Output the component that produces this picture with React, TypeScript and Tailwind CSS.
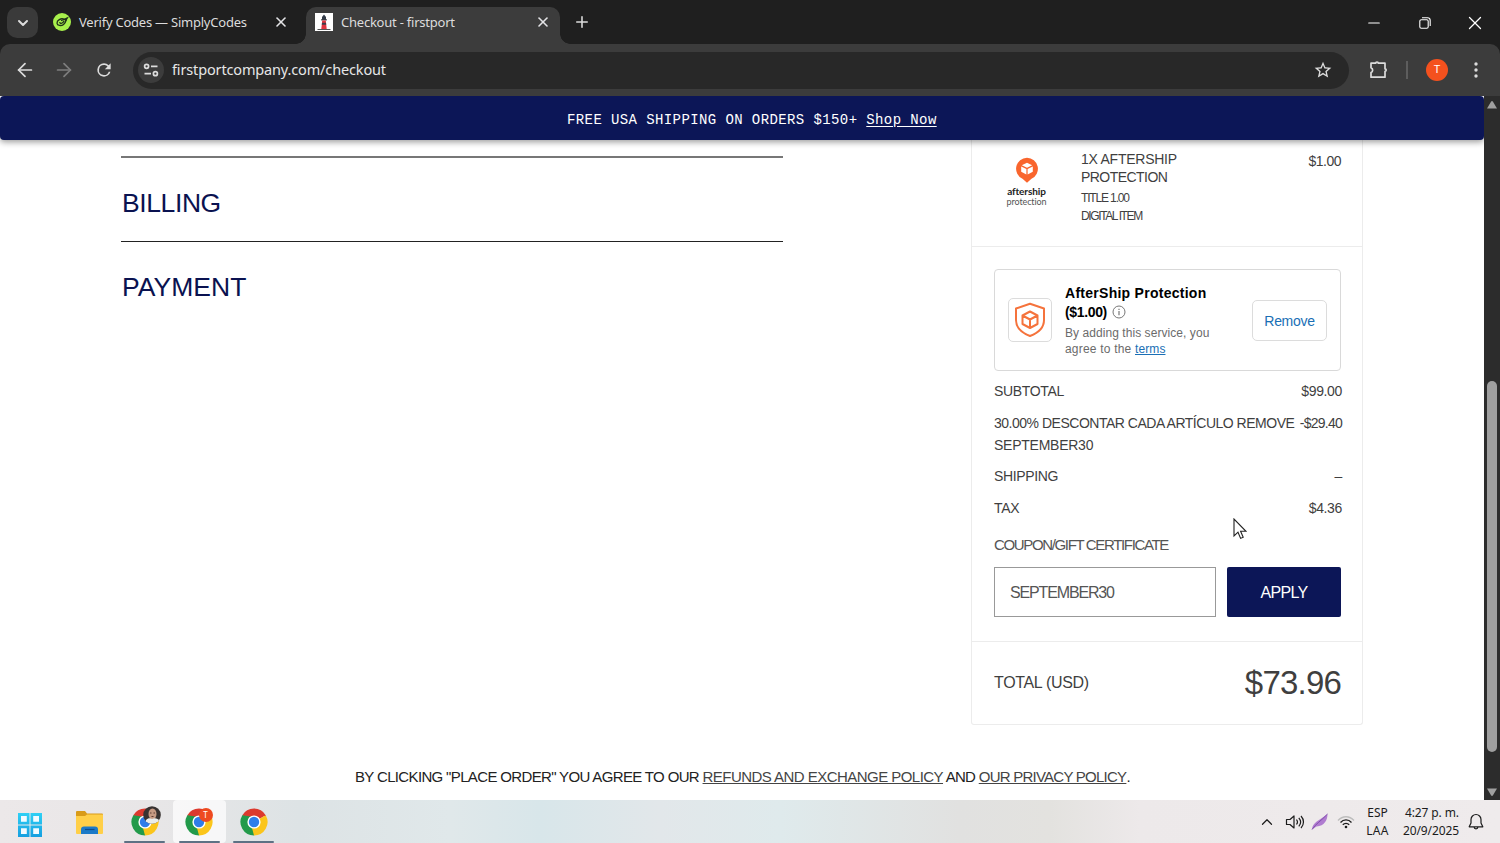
import { ReactNode } from "react";
import {
  ArrowLeft,
  ArrowRight,
  ChevronDown,
  ChevronUp,
  Minus,
  Plus,
  X,
} from "lucide-react";

function ChromeLogo() {
  return (
    <svg viewBox="0 0 28 28" className="size-7">
      <path d="M14 14 L2.3 7.25 A13.5 13.5 0 0 1 25.7 7.25 Z" fill="#dc3a2e" />
      <path d="M14 14 L25.7 7.25 A13.5 13.5 0 0 1 14 27.5 Z" fill="#fbc51b" />
      <path d="M14 14 L14 27.5 A13.5 13.5 0 0 1 2.3 7.25 Z" fill="#229a4a" />
      <path d="M14 7.7 H25.9 L25.7 7.25 L14 6 Z" fill="#dc3a2e" />
      <path d="M8.5 17.2 L2.3 7.25 L14 9 Z" fill="#229a4a" />
      <path d="M19.5 17.2 L14 27.5 L12 20 Z" fill="#fbc51b" />
      <circle cx="14" cy="14" r="6.6" fill="#fff" />
      <circle cx="14" cy="14" r="5.2" fill="#2f7de9" />
    </svg>
  );
}

function SimplyCodesIcon() {
  return (
    <svg viewBox="0 0 18 18" className="size-[18px]">
      <circle cx="9" cy="9" r="9" fill="#a8f04c" />
      <g fill="none" stroke="#20301a" strokeWidth="1.3" strokeLinecap="round">
        <path d="M11 6.2C8 4.8 3.8 7.3 4 10.2c.2 2.6 4.2 3 6.6 1.2 1.4-1 2.2-2.6 2.6-4.2" />
        <path d="M6.8 9.6c.6 1.4 3 .8 4-1.4M8.5 7.5l5.8-2.6-2 3.2" />
      </g>
    </svg>
  );
}

function LighthouseIcon() {
  return (
    <svg viewBox="0 0 18 18" className="size-[18px]">
      <path d="M0 0h18v18H0z" fill="#fff" />
      <path d="M7 4l2-2.5L11 4v2.5H7z" fill="#333b48" />
      <path d="M6.2 6.2h5.6v1.2H6.2z" fill="#20252e" />
      <path d="M7.2 7.4h3.6l.9 8.6H6.3z" fill="#e03540" />
      <path d="M7 9.8h4l.2 2H6.8z" fill="#3b3f4a" />
      <path d="M2.5 16h13v1h-13z" fill="#555" />
    </svg>
  );
}

function Tab({
  icon,
  title,
  active,
}: {
  icon: ReactNode;
  title: string;
  active?: boolean;
}) {
  return (
    <div
      className={
        active
          ? "relative h-[37px] w-[254px] rounded-t-[10px] bg-[#3c3c3c] flex items-center pl-[9px] pr-[9px] pb-[7px]"
          : "h-[37px] w-[254px] flex items-center pl-[9px] pr-[9px] pb-[7px]"
      }
    >
      {active && (
        <>
          <span className="absolute -left-2.5 bottom-0 size-2.5 bg-[radial-gradient(circle_at_0_0,transparent_9.5px,#3c3c3c_10px)]" />
          <span className="absolute -right-2.5 bottom-0 size-2.5 bg-[radial-gradient(circle_at_100%_0,transparent_9.5px,#3c3c3c_10px)]" />
        </>
      )}
      {icon}
      <span className="ml-[8px] flex-1 whitespace-nowrap text-[13px] leading-5 tracking-[-0.23px]">
        {title}
      </span>
      <X className="size-4 text-zinc-200" strokeWidth={2.4} />
    </div>
  );
}

function TabStrip() {
  return (
    <div className="h-11 bg-[#1f1f1f] flex pt-[7px] text-[#dcdcdc] font-['Noto_Sans',sans-serif]">
      <button
        type="button"
        className="ml-[7px] size-[31px] rounded-[10px] bg-[#3a3a3a] flex items-center justify-center"
      >
        <ChevronDown className="size-4" strokeWidth={3} />
      </button>
      <div className="ml-[6px] flex gap-2">
        <Tab icon={<SimplyCodesIcon />} title="Verify Codes — SimplyCodes" />
        <Tab active icon={<LighthouseIcon />} title="Checkout - firstport" />
      </div>
      <Plus className="ml-[13px] mt-[6px] size-[18px]" strokeWidth={2.1} />
      <div className="ml-auto flex h-[31px] items-center text-white">
        <Minus className="size-[18px] mr-[36px]" strokeWidth={1.6} />
        <svg
          viewBox="0 0 12 12"
          className="size-3 mr-[33px]"
          fill="none"
          stroke="currentColor"
          strokeWidth="1.1"
        >
          <rect x=".8" y="2.8" width="8.4" height="8.4" rx="1.5" />
          <path d="M3 .8h5.5a2.7 2.7 0 0 1 2.7 2.7V9" />
        </svg>
        <X className="size-[22px] mr-[14px]" strokeWidth={1.4} />
      </div>
    </div>
  );
}

function Toolbar() {
  return (
    <div className="bg-[#1f1f1f]">
      <div className="h-[52px] rounded-t-[10px] bg-[#3c3c3c] flex items-center text-[#dcdcdc]">
        <ArrowLeft className="ml-3.5 size-[22px]" strokeWidth={1.9} />
        <ArrowRight
          className="ml-[17px] size-[22px] text-[#7d7d7d]"
          strokeWidth={1.9}
        />
        <svg
          viewBox="0 0 24 24"
          className="ml-[19px] size-5"
          fill="currentColor"
        >
          <path d="M17.65 6.35A7.95 7.95 0 0 0 12 4a8 8 0 1 0 7.73 10h-2.08A6 6 0 1 1 12 6c1.66 0 3.14.69 4.22 1.78L13 11h7V4z" />
        </svg>
        <div className="ml-[19px] w-[1216px] h-[37px] rounded-full bg-[#282828] flex items-center pl-[5px] pr-[16px]">
          <span className="size-[26px] rounded-full bg-[#3c3c3c] flex items-center justify-center">
            <svg
              viewBox="0 0 16 14"
              className="w-4 h-3.5"
              fill="none"
              stroke="currentColor"
              strokeWidth="1.7"
            >
              <circle cx="3.6" cy="3.3" r="2" />
              <path d="M8 3.3h6.5M1.5 10.7H8" />
              <circle cx="12.4" cy="10.7" r="2" />
            </svg>
          </span>
          <span className="ml-2 flex-1 font-['Noto_Sans',sans-serif] text-[14.5px] tracking-[-0.15px] text-[#e6e6e6]">
            firstportcompany.com/checkout
          </span>
          <svg viewBox="0 0 24 24" className="size-5" fill="currentColor">
            <path d="M22 9.24l-7.19-.62L12 2 9.19 8.63 2 9.24l5.46 4.73L5.82 21 12 17.27 18.18 21l-1.63-7.03L22 9.24zM12 15.4l-3.76 2.27 1-4.28-3.32-2.88 4.38-.38L12 6.1l1.71 4.04 4.38.38-3.32 2.88 1 4.28L12 15.4z" />
          </svg>
        </div>
        <svg
          viewBox="0 0 20 20"
          className="ml-[20px] size-5"
          fill="none"
          stroke="currentColor"
          strokeWidth="1.7"
          strokeLinejoin="round"
        >
          <path d="M2 3.2h4.7a1.3 1.2 0 0 1 2.6 0H16v5.6a1.2 1.3 0 0 1 0 2.6V17.2H2v-4.7c2-.6 2.4-3.8 0-4.8z" />
        </svg>
        <div className="ml-[17px] w-0.5 h-[18px] bg-[#5d5d5d]" />
        <span className="ml-[18px] size-[22px] rounded-full bg-[#f4511e] text-white text-[11px] flex items-center justify-center font-['Roboto',sans-serif]">
          T
        </span>
        <svg viewBox="0 0 4 16" className="ml-[26px] w-1 h-4" fill="currentColor">
          <circle cx="2" cy="2" r="1.7" />
          <circle cx="2" cy="8" r="1.7" />
          <circle cx="2" cy="14" r="1.7" />
        </svg>
      </div>
    </div>
  );
}

function AftershipLogo() {
  return (
    <div className="w-[41px] flex flex-col items-center">
      <svg viewBox="0 0 24 26" className="w-6 h-[26px]">
        <path
          d="M12 .8a11 11 0 0 1 4.5 21l-4.5 4-4.5-4A11 11 0 0 1 12 .8z"
          fill="#f9652d"
        />
        <path d="M12 5.8l5.2 2.5-5.2 2.5-5.2-2.5z" fill="#fff" />
        <path d="M6.2 9.5l5.2 2.5v5.4l-5.2-2.6z" fill="#fff" />
        <path d="M17.8 9.5L12.6 12v5.4l5.2-2.6z" fill="#fff" />
      </svg>
      <span className="mt-[3px] font-['Lato',sans-serif] font-bold text-[10px] leading-[11px] tracking-[-0.1px] text-[#222]">
        aftership
      </span>
      <span className="font-['Lato',sans-serif] text-[9px] leading-[9px] tracking-[-0.1px] text-[#555]">
        protection
      </span>
    </div>
  );
}

function ProtectionBox() {
  return (
    <div className="w-[347px] h-[102px] rounded-[4px] border border-[#d9d9d9] flex items-center">
      <div className="ml-[13px] size-11 rounded-[5px] border border-[#dcdcdc] flex items-center justify-center">
        <svg
          viewBox="0 0 32 36"
          className="w-8 h-9"
          fill="none"
          stroke="#f5733c"
          strokeWidth="2"
          strokeLinejoin="round"
        >
          <path d="M16 1.8L30 6.5V18c0 8-6 13-14 16C8 31 2 26 2 18V6.5z" />
          <path d="M16 9.5l7.5 4v8.5L16 26l-7.5-4v-8.5zM8.5 13.5l7.5 4 7.5-4M16 17.5V26" />
        </svg>
      </div>
      <div className="ml-[13px] w-[187px] text-[12px] leading-4 text-[#6b6b6b]">
        <p className="text-[14px] leading-[19px] font-bold text-black tracking-[0.27px]">
          AfterShip Protection
        </p>
        <p className="flex items-center mb-[3px] text-[14px] leading-[19px] font-bold text-black">
          <span>($1.00)</span>
          <svg
            viewBox="0 0 14 14"
            className="ml-[5px] size-3.5"
            fill="none"
            stroke="#777"
          >
            <circle cx="7" cy="7" r="6" />
            <path d="M7 6v4.2M7 3.7v1.2" strokeWidth="1.2" />
          </svg>
        </p>
        <p className="tracking-[0.06px]">By adding this service, you</p>
        <p>
          <span className="tracking-[0.2px]">agree to the </span>
          <a className="text-[#1a6fb5] underline tracking-[0.1px]" href="#">
            terms
          </a>
        </p>
      </div>
      <button
        type="button"
        className="w-[75px] h-[41px] rounded-[5px] border border-[#dcdcdc] pt-px text-[14px] tracking-[-0.3px] text-[#1a6fb5]"
      >
        Remove
      </button>
    </div>
  );
}

function OrderSummary() {
  return (
    <aside className="ml-[188px] w-[392px] h-[585px] rounded-b-[3px] border-x border-b border-[#ececec] text-[#3f3f3f] text-[14px] leading-[22px] tracking-[-0.35px]">
      <div className="h-[107px] border-b border-[#ececec] flex pt-[11px] pl-[34px] pr-[21px]">
        <div className="pt-[6px]">
          <AftershipLogo />
        </div>
        <div className="ml-[34px] flex-1 leading-[17.5px]">
          <p className="tracking-[-0.25px]">1X AFTERSHIP</p>
          <p className="tracking-[-0.55px]">PROTECTION</p>
          <p className="mt-[4px] text-[12px] tracking-[-1.15px]">TITLE 1.00</p>
          <p className="text-[12px] tracking-[-1.38px]">DIGITAL ITEM</p>
        </div>
        <span className="leading-5 tracking-[-0.5px]">$1.00</span>
      </div>

      <div className="h-[395px] border-b border-[#ececec] pt-[22px] pl-[22px] pr-[20px]">
        <ProtectionBox />
        <div className="mt-[9px] flex justify-between">
          <span>SUBTOTAL</span>
          <span>$99.00</span>
        </div>
        <div className="mt-[10px] flex justify-between">
          <div>
            <p className="tracking-[-0.49px]">
              30.00% DESCONTAR CADA ARTÍCULO REMOVE
            </p>
            <p className="tracking-[-0.25px]">SEPTEMBER30</p>
          </div>
          <span className="tracking-[-0.75px]">-$29.40</span>
        </div>
        <div className="mt-[9px] flex justify-between">
          <span>SHIPPING</span>
          <span>–</span>
        </div>
        <div className="mt-[10px] flex justify-between">
          <span>TAX</span>
          <span>$4.36</span>
        </div>
        <p className="mt-[15px] text-[15px] tracking-[-1.35px] text-[#555]">
          COUPON/GIFT CERTIFICATE
        </p>
        <div className="mt-[11px] flex justify-between pr-[1px]">
          <div className="w-[222px] h-[50px] border border-[#999] px-[15px] text-[16px] leading-[49px] tracking-[-1.15px] text-[#555]">
            SEPTEMBER30
          </div>
          <button
            type="button"
            className="w-[114px] h-[50px] rounded-[2px] bg-[#0c1657] pt-px text-white text-[16px] tracking-[-0.7px]"
          >
            APPLY
          </button>
        </div>
      </div>

      <div className="h-[82px] flex items-center justify-between pl-[22px] pr-[21px]">
        <span className="text-[16px] tracking-[-0.33px]">TOTAL (USD)</span>
        <span className="text-[33px] tracking-[-0.8px]">$73.96</span>
      </div>
    </aside>
  );
}

function CheckoutPage() {
  return (
    <main className="w-[1484px] h-[704px] overflow-hidden bg-white font-['Liberation_Sans',Arial,sans-serif]">
      <div className="relative h-11 rounded-sm bg-[#0c1657] shadow-[0_2px_6px_rgba(0,0,0,0.4)] pt-[13px] pl-[567px] font-['Liberation_Mono',monospace] text-[14px] leading-[22px] tracking-[0.4px] text-white whitespace-pre">
        FREE USA SHIPPING ON ORDERS $150+{" "}
        <a className="underline underline-offset-2" href="#">
          Shop Now
        </a>
      </div>
      <div className="flex">
        <section className="ml-[121px] w-[662px] pt-4 text-[26.5px] leading-[30px] text-[#0a1250]">
          <div className="h-0.5 bg-[#777]" />
          <h2 className="mt-[30px] mb-[23px] pl-px tracking-[-0.4px]">
            BILLING
          </h2>
          <div className="h-px bg-[#222]" />
          <h2 className="mt-[30px] pl-px tracking-[0.05px]">PAYMENT</h2>
        </section>
        <OrderSummary />
      </div>
      <p className="mt-[42px] pl-[355px] text-[15px] leading-[20px] tracking-[-0.65px] text-[#222] whitespace-pre">
        BY CLICKING "PLACE ORDER" YOU AGREE TO OUR{" "}
        <a className="text-[#444] underline tracking-[-0.54px]" href="#">
          REFUNDS AND EXCHANGE POLICY
        </a>
        <span className="tracking-[-0.7px]"> AND </span>
        <a className="text-[#444] underline tracking-[-0.75px]" href="#">
          OUR PRIVACY POLICY
        </a>
        .
      </p>
    </main>
  );
}

function Scrollbar() {
  return (
    <div className="w-4 h-[704px] bg-[#2c2c2c] flex flex-col items-center pt-[5px] pb-1">
      <svg viewBox="0 0 10 8" className="w-2.5 h-2" fill="#a0a0a0">
        <path d="M4 .8a1.2 1.2 0 0 1 2 0L10 7.5H0z" />
      </svg>
      <div className="mt-[272px] w-2.5 h-[371px] rounded-full bg-[#9f9f9f]" />
      <svg viewBox="0 0 10 8" className="mt-auto w-2.5 h-2" fill="#a0a0a0">
        <path d="M4 7.2a1.2 1.2 0 0 0 2 0L10 .5H0z" />
      </svg>
    </div>
  );
}

function TaskbarApp({
  children,
  active,
}: {
  children?: ReactNode;
  active?: boolean;
}) {
  return (
    <div
      className={
        active
          ? "relative w-[53px] h-[43px] rounded bg-white/70 flex justify-center pt-[8px]"
          : "relative w-[53px] h-[43px] flex justify-center pt-[8px]"
      }
    >
      <ChromeLogo />
      {children}
      <span className="absolute bottom-0 left-[6px] w-[41px] h-0.5 rounded-full bg-[#5d7184]" />
    </div>
  );
}

function Taskbar() {
  return (
    <footer className="h-[43px] flex bg-[linear-gradient(90deg,#ece8e9_0%,#e8e6e7_10%,#dde3e5_20%,#e0e8ea_30%,#d8e6ea_36%,#e2e7ea_44%,#dfeaec_52%,#e1e1e0_64%,#e3e2df_70%,#ede9ea_76%,#efebec_100%)] font-['Noto_Sans',sans-serif] text-[#1c1c1c]">
      <svg viewBox="0 0 24 24" className="ml-[18px] mt-[13px] size-6">
        <defs>
          <linearGradient id="start" x1="0" y1="0" x2="0" y2="1">
            <stop offset="0" stopColor="#2fd0f5" />
            <stop offset="1" stopColor="#169fe0" />
          </linearGradient>
        </defs>
        <path
          d="M0 0h11.5v11.5H0zM12.5 0H24v11.5H12.5zM0 12.5h11.5V24H0zM12.5 12.5H24V24H12.5z"
          fill="url(#start)"
        />
        <path
          d="M3 3h5.8v5.8H3zM15.2 3H21v5.8h-5.8zM3 15.2h5.8V21H3zM15.2 15.2H21V21h-5.8z"
          fill="#f2fbff"
        />
      </svg>
      <svg viewBox="0 0 27 23" className="ml-[34px] mt-[11px] w-[27px] h-[23px]">
        <path d="M0 1a1 1 0 0 1 1-1h8l2 2.5h15a1 1 0 0 1 1 1V12H0z" fill="#d99b18" />
        <path d="M0 5h9l2-1.5h16V22a1 1 0 0 1-1 1H1a1 1 0 0 1-1-1z" fill="#ffcf48" />
        <path d="M5 23v-4.5a3 3 0 0 1 3-3h11a3 3 0 0 1 3 3V23z" fill="#1c7ac8" />
        <path d="M9 18.5h9.5" stroke="#0d4d8c" strokeWidth="1.2" />
      </svg>
      <div className="ml-[15px] flex gap-[1.5px]">
        <TaskbarApp>
          <svg
            viewBox="0 0 18 18"
            className="absolute left-[25px] top-1.5 size-[18px]"
          >
            <clipPath id="avatar">
              <circle cx="9" cy="9" r="8.8" />
            </clipPath>
            <g clipPath="url(#avatar)">
              <path d="M0 0h18v18H0z" fill="#383231" />
              <ellipse cx="9.5" cy="8" rx="4" ry="5.5" fill="#c69a83" />
              <path d="M2 18c0-5 4-7 7-5 4-2 8 0 9 5z" fill="#e9eceb" />
              <path d="M7 7h1.5M10.5 7H12M8.5 10.5h2" stroke="#5f3d34" />
            </g>
          </svg>
        </TaskbarApp>
        <TaskbarApp active>
          <span className="absolute left-[26px] top-[8px] size-[14px] rounded-full bg-[#ee4a20] text-white text-[8px] leading-[14px] text-center">
            T
          </span>
        </TaskbarApp>
        <TaskbarApp />
      </div>

      <div className="ml-auto flex items-center">
        <ChevronUp className="size-[18px] mr-[9px]" strokeWidth={1.6} />
        <svg
          viewBox="0 0 20 16"
          className="w-5 h-4 mr-[6px]"
          fill="none"
          stroke="currentColor"
          strokeWidth="1.2"
          strokeLinejoin="round"
        >
          <path d="M1.5 5.5H5L9 2v12l-4-3.500H1.5zM11.5 5.5c1.2 1.5 1.2 3.5 0 5M13.8 3.8c2.2 2.5 2.2 6 0 8.5M16 2c3.3 3.6 3.3 8.5 0 12" />
        </svg>
        <svg viewBox="0 0 18 18" className="size-[18px] mr-[8px]">
          <path d="M1 16.5C1.5 9 8 8 16.5 1c0 6-3 12-11 12.5z" fill="#b07cd0" />
          <path
            d="M1 16.5C5 10.5 10 8 16.5 1"
            stroke="#7d4aa8"
            strokeWidth=".9"
            fill="none"
          />
        </svg>
        <svg
          viewBox="0 0 18 14"
          className="w-[18px] h-3.5 mr-[10px]"
          fill="none"
          stroke="currentColor"
          strokeWidth="1.3"
        >
          <path d="M1 5.5c4.5-5 11.500-5 16 0" stroke="#bdbdbd" />
          <path d="M3.5 7.5c3-3.500 8-3.500 11 0M5.8 9.8c1.8-2 4.600-2 6.400 0" />
          <circle cx="9" cy="12" r="1.3" fill="currentColor" stroke="none" />
        </svg>
        <div className="w-[25px] text-center text-[12px] leading-[18px]">
          <p>ESP</p>
          <p className="tracking-[0.3px]">LAA</p>
        </div>
        <div className="ml-3 w-[57px] text-right text-[12px] leading-[18px] tracking-[-0.1px] whitespace-nowrap">
          <p>4:27 p. m.</p>
          <p>20/9/2025</p>
        </div>
        <svg
          viewBox="0 0 16 18"
          className="ml-[9px] mr-[16px] w-4 h-[18px]"
          fill="none"
          stroke="currentColor"
          strokeWidth="1.2"
          strokeLinejoin="round"
        >
          <path d="M8 1.5a5 5 0 0 0-5 5V10l-1.8 3.8h13.6L13 10V6.5a5 5 0 0 0-5-5zM6 14c.3 2.5 3.700 2.500 4 0" />
        </svg>
      </div>
    </footer>
  );
}

export default function App() {
  return (
    <div className="relative w-[1500px] h-[843px] overflow-hidden">
      <TabStrip />
      <Toolbar />
      <div className="flex bg-[#2c2c2c]">
        <CheckoutPage />
        <Scrollbar />
      </div>
      <Taskbar />
      {/* mouse pointer */}
      <svg
        viewBox="0 0 14 22"
        className="absolute left-[1233px] top-[518px] w-3.5 h-[22px]"
        fill="#fff"
        stroke="#222"
        strokeWidth="1.1"
      >
        <path d="M1 1v17l4-3.8 2.6 6.2 2.600-1.100-2.600-6H13z" />
      </svg>
    </div>
  );
}
